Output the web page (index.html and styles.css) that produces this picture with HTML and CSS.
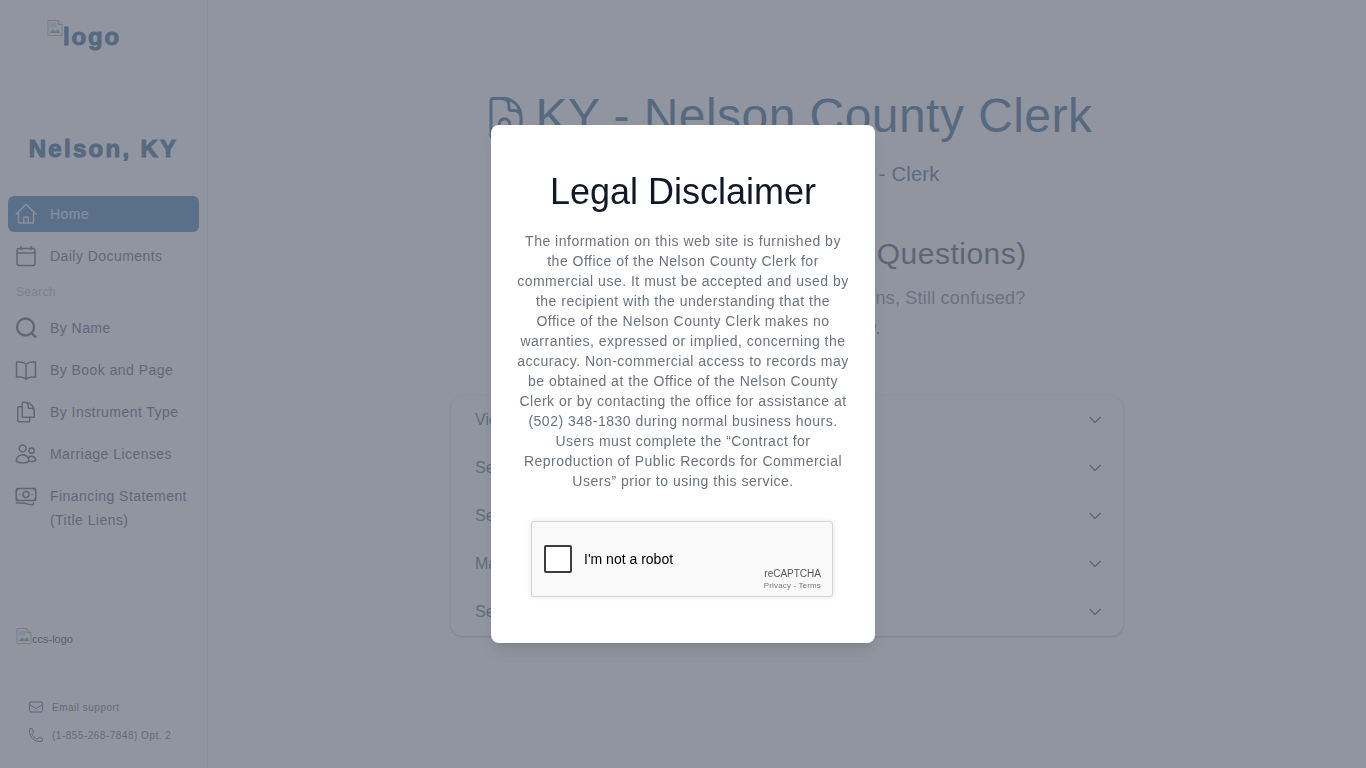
FILE: index.html
```html
<!DOCTYPE html>
<html lang="en">
  <head>
    <meta charset="UTF-8" />
    <title>KY - Nelson County Clerk</title>
    <link rel="stylesheet" href="styles.css">
  </head>
  <body>
    <div class="app">
      <aside class="sidebar">
        <div class="logo">
          <svg class="broken-img" viewBox="0 0 16 16"><path class="bi-page" d="M1 .5h10l4 4v11H1z"/><path class="bi-fold" d="M11 .5v4h4"/><path class="bi-hill" d="M2.5 13l3.5-4 2.5 2.5L11 9l2.5 4z"/><path class="bi-sky" d="M2.5 2.5h7v5h-7z"/></svg>
          <span>logo</span>
        </div>
        <h2 class="county">Nelson, KY</h2>
        <nav class="nav">
          <a class="nav-item active">
            <svg class="icon" viewBox="0 0 24 24"><path d="M2.25 12l8.954-8.955c.44-.439 1.152-.439 1.591 0L21.75 12M4.5 9.75v10.125c0 .621.504 1.125 1.125 1.125H9.75v-4.875c0-.621.504-1.125 1.125-1.125h2.25c.621 0 1.125.504 1.125 1.125V21h4.125c.621 0 1.125-.504 1.125-1.125V9.75M8.25 21h8.25"/></svg>
            <span>Home</span>
          </a>
          <a class="nav-item">
            <svg class="icon" viewBox="0 0 24 24"><path d="M7 2.5v3M17 2.5v3M5 4.5h14A2 2 0 0121 6.500v13a2 2 0 01-2 2H5a2 2 0 01-2-2v-13a2 2 0 012-2zM3 9h18"/></svg>
            <span>Daily Documents</span>
          </a>
          <p class="nav-label">Search</p>
          <a class="nav-item">
            <svg class="icon icon-bold" viewBox="0 0 24 24"><circle cx="11.500" cy="11" r="8.500"/><path d="M18 17.500l3.500 3.500"/></svg>
            <span>By Name</span>
          </a>
          <a class="nav-item">
            <svg class="icon" viewBox="0 0 24 24"><path d="M12 6.500C10.500 4.800 8 4 6 4H2.500v15H6c2.400 0 4.600.7 6 2.300m0-14.800C13.500 4.800 16 4 18 4h3.500v15H18c-2.400 0-4.600.7-6 2.300m0-14.800v14.800"/></svg>
            <span>By Book and Page</span>
          </a>
          <a class="nav-item">
            <svg class="icon" viewBox="0 0 24 24"><path d="M15.750 17.250v3.375c0 .621-.504 1.125-1.125 1.125h-9.750a1.125 1.125 0 01-1.125-1.125V7.875c0-.621.504-1.125 1.125-1.125H6.750a9.060 9.060 0 011.500.124m7.500 10.376h3.375c.621 0 1.125-.504 1.125-1.125V11.250c0-4.460-3.243-8.161-7.500-8.876a9.060 9.060 0 00-1.500-.124H9.375c-.621 0-1.125.504-1.125 1.125v3.500m7.500 10.375H9.375a1.125 1.125 0 01-1.125-1.125v-9.250m12 6.625v-1.875a3.375 3.375 0 00-3.375-3.375h-1.500a1.125 1.125 0 01-1.125-1.125v-1.500a3.375 3.375 0 00-3.375-3.375H9.750"/></svg>
            <span>By Instrument Type</span>
          </a>
          <a class="nav-item">
            <svg class="icon" viewBox="0 0 24 24"><path d="M15 19.128a9.380 9.380 0 002.625.372 9.337 9.337 0 004.121-.952 4.125 4.125 0 00-7.533-2.493M15 19.128v-.003c0-1.113-.285-2.160-.786-3.070M15 19.128v.106A12.318 12.318 0 018.624 21c-2.331 0-4.512-.645-6.374-1.766l-.001-.109a6.375 6.375 0 0111.964-3.070M12 6.375a3.375 3.375 0 11-6.750 0 3.375 3.375 0 016.750 0zm8.250 2.250a2.625 2.625 0 11-5.250 0 2.625 2.625 0 015.250 0z"/></svg>
            <span>Marriage Licenses</span>
          </a>
          <a class="nav-item">
            <svg class="icon" viewBox="0 0 24 24"><path d="M2.250 18.750a60.070 60.070 0 0115.797 2.101c.727.198 1.453-.342 1.453-1.096V18.750M3.750 4.500v.75A.75.75 0 013 6h-.75m0 0v-.375c0-.621.504-1.125 1.125-1.125H20.250M2.250 6v9m18-10.500v.75c0 .414.336.75.75.75h.75m-1.500-1.500h.375c.621 0 1.125.504 1.125 1.125v9.750c0 .621-.504 1.125-1.125 1.125h-.375m1.500-1.500H21a.75.75 0 00-.75.75v.75m0 0H3.750m0 0h-.375a1.125 1.125 0 01-1.125-1.125V15m1.500 1.500v-.75A.75.75 0 003 15h-.75M15 10.500a3 3 0 11-6 0 3 3 0 016 0zm3 0h.008v.008H18V10.500zm-12 0h.008v.008H6V10.500z"/></svg>
            <span>Financing Statement (Title Liens)</span>
          </a>
        </nav>
        <div class="ccs-logo">
          <svg class="broken-img" viewBox="0 0 16 16"><path class="bi-page" d="M1 .5h10l4 4v11H1z"/><path class="bi-fold" d="M11 .5v4h4"/><path class="bi-hill" d="M2.5 13l3.5-4 2.5 2.5L11 9l2.5 4z"/><path class="bi-sky" d="M2.5 2.5h7v5h-7z"/></svg>
          <span>ccs-logo</span>
        </div>
        <div class="support">
          <a class="support-item">
            <svg class="icon-sm" viewBox="0 0 24 24"><path d="M21.750 6.750v10.500a2.250 2.250 0 01-2.250 2.250h-15a2.250 2.250 0 01-2.250-2.250V6.750m19.500 0A2.250 2.250 0 0019.500 4.500h-15a2.250 2.250 0 00-2.250 2.250m19.500 0v.243a2.250 2.250 0 01-1.070 1.916l-7.500 4.615a2.250 2.250 0 01-2.360 0L3.320 8.910a2.250 2.250 0 01-1.070-1.916V6.750"/></svg>
            <span>Email support</span>
          </a>
          <a class="support-item">
            <svg class="icon-sm" viewBox="0 0 24 24"><path d="M2.250 6.750c0 8.284 6.716 15 15 15h2.250a2.250 2.250 0 002.250-2.250v-1.372c0-.516-.351-.966-.852-1.091l-4.423-1.106c-.44-.11-.902.055-1.173.417l-.97 1.293c-.282.376-.769.542-1.210.38a12.035 12.035 0 01-7.143-7.143c-.162-.441.004-.928.38-1.210l1.293-.97c.363-.271.527-.734.417-1.173L6.963 3.102a1.125 1.125 0 00-1.091-.852H4.500A2.250 2.250 0 002.250 4.500v2.250z"/></svg>
            <span>(1-855-268-7848) Opt. 2</span>
          </a>
        </div>
      </aside>

      <main class="content">
        <h1 class="page-title">
          <svg class="title-icon" viewBox="0 0 24 24"><path d="M19.500 14.250v-2.625a3.375 3.375 0 00-3.375-3.375h-1.500A1.125 1.125 0 0113.500 7.125v-1.500a3.375 3.375 0 00-3.375-3.375H8.250M10.500 2.250H5.625c-.621 0-1.125.504-1.125 1.125v17.250c0 .621.504 1.125 1.125 1.125h12.750c.621 0 1.125-.504 1.125-1.125V11.250a9 9 0 00-9-9zM13.100 16.900a2.600 2.600 0 10-3.700-3.700 2.600 2.600 0 003.700 3.700zm0 0L15 18.800"/></svg>
          <span>KY - Nelson County Clerk</span>
        </h1>
        <p class="page-sub">Kentucky - Nelson County - Clerk</p>
        <h2 class="faq-title">FAQ (Frequently Asked Questions)</h2>
        <p class="faq-text">If you've read through all our help sections, Still confused?</p>
        <p class="faq-text">Contact our office now.</p>
        <div class="accordion">
          <div class="acc-row">
            <span>Viewing Documents</span>
            <svg class="chevron" viewBox="0 0 24 24"><path d="M19.500 8.250l-7.500 7.500-7.500-7.500"/></svg>
          </div>
          <div class="acc-row">
            <span>Searching by Name</span>
            <svg class="chevron" viewBox="0 0 24 24"><path d="M19.500 8.250l-7.500 7.500-7.500-7.500"/></svg>
          </div>
          <div class="acc-row">
            <span>Searching by Book and Page</span>
            <svg class="chevron" viewBox="0 0 24 24"><path d="M19.500 8.250l-7.500 7.500-7.500-7.500"/></svg>
          </div>
          <div class="acc-row">
            <span>Marriage Licenses</span>
            <svg class="chevron" viewBox="0 0 24 24"><path d="M19.500 8.250l-7.500 7.500-7.500-7.500"/></svg>
          </div>
          <div class="acc-row">
            <span>Searching by Instrument Type</span>
            <svg class="chevron" viewBox="0 0 24 24"><path d="M19.500 8.250l-7.500 7.500-7.500-7.500"/></svg>
          </div>
        </div>
      </main>
    </div>

    <div class="overlay">
      <div class="modal">
        <h2 class="modal-title">Legal Disclaimer</h2>
        <p class="modal-text">The information on this web site is furnished by the Office of the Nelson County Clerk for commercial use. It must be accepted and used by the recipient with the understanding that the Office of the Nelson County Clerk makes no warranties, expressed or implied, concerning the accuracy. Non-commercial access to records may be obtained at the Office of the Nelson County Clerk or by contacting the office for assistance at (502) 348-1830 during normal business hours. Users must complete the “Contract for Reproduction of Public Records for Commercial Users” prior to using this service.</p>
        <div class="captcha">
          <span class="captcha-box"></span>
          <span class="captcha-label">I'm not a robot</span>
          <div class="captcha-brand">
            <span class="captcha-name">reCAPTCHA</span>
            <span class="captcha-links">Privacy - Terms</span>
          </div>
        </div>
      </div>
    </div>
  </body>
</html>
```

FILE: styles.css
```css
* {
  box-sizing: border-box;
}
body {
  margin: 0;
  font-family: "Liberation Sans", Arial, sans-serif;
  background-color: #ffffff;
  color: #374151;
  overflow: hidden;
}
h1, h2, p {
  margin: 0;
  font-weight: 400;
}
.app {
  display: flex;
  height: 768px;
}

/* sidebar */
.sidebar {
  width: 208px;
  flex-shrink: 0;
  display: flex;
  flex-direction: column;
  border-right: 1px solid #e5e7eb;
}
.broken-img {
  width: 16px;
  height: 16px;
  flex-shrink: 0;
}
.bi-page {
  fill: #ffffff;
  stroke: #a0a0a0;
}
.bi-fold {
  fill: #e0e0e0;
  stroke: #a0a0a0;
}
.bi-hill {
  fill: #5fae5f;
}
.bi-sky {
  fill: #c6d8f5;
}
.logo {
  display: flex;
  align-items: flex-start;
  margin: 20px 0 0 47px;
  height: 32px;
  font-size: 24px;
  font-weight: 700;
  line-height: 34px;
  color: #155080;
  letter-spacing: 1.8px;
  -webkit-text-stroke: 0.9px #155080;
}
.county {
  margin-top: 81px;
  text-align: center;
  font-size: 24px;
  font-weight: 700;
  line-height: 32px;
  color: #155080;
  letter-spacing: 2.3px;
  -webkit-text-stroke: 1.1px #155080;
}
.nav {
  display: flex;
  flex-direction: column;
  gap: 6px;
  margin-top: 31px;
  padding: 0 8px;
}
.nav-item {
  display: flex;
  align-items: flex-start;
  gap: 12px;
  padding: 6px 6px;
  border-radius: 6px;
  font-size: 14px;
  line-height: 24px;
  letter-spacing: 0.45px;
  color: #3f4756;
}
.nav-item.active {
  background-color: #2a6ea3;
  color: #e5e7eb;
}
.icon {
  width: 24px;
  height: 24px;
  flex-shrink: 0;
  fill: none;
  stroke: currentColor;
  stroke-width: 1.5;
  stroke-linecap: round;
  stroke-linejoin: round;
}
.icon-bold {
  stroke-width: 2.3;
}
.nav-label {
  margin: 4px 0 4px 8px;
  font-size: 12px;
  line-height: 16px;
  letter-spacing: 0.3px;
  color: #a9aeb8;
}
.ccs-logo {
  display: flex;
  align-items: flex-start;
  margin: 90px 0 0 16px;
  height: 16px;
  font-size: 11px;
  line-height: 22px;
  color: #1f2937;
}
.support {
  display: flex;
  flex-direction: column;
  gap: 12px;
  margin-top: 55px;
  padding-left: 28px;
}
.support-item {
  display: flex;
  align-items: center;
  gap: 8px;
  height: 16px;
  font-size: 10px;
  letter-spacing: 0.5px;
  color: #4b5563;
}
.icon-sm {
  width: 16px;
  height: 16px;
  flex-shrink: 0;
  fill: none;
  stroke: #155080;
  stroke-width: 1.5;
  stroke-linecap: round;
  stroke-linejoin: round;
}

/* main content */
.content {
  flex: 1;
  display: flex;
  flex-direction: column;
  align-items: center;
  padding-top: 88px;
}
.page-title {
  display: flex;
  align-items: center;
  gap: 6px;
  font-size: 48px;
  line-height: 56px;
  letter-spacing: 0.45px;
  color: #155080;
}
.title-icon {
  width: 48px;
  height: 48px;
  margin-top: 4px;
  fill: none;
  stroke: currentColor;
  stroke-width: 1.5;
  stroke-linecap: round;
  stroke-linejoin: round;
}
.page-sub {
  margin-top: 16px;
  font-size: 20px;
  line-height: 28px;
  letter-spacing: 0.3px;
  color: #31557a;
}
.faq-title {
  margin-top: 48px;
  font-size: 30px;
  line-height: 36px;
  letter-spacing: 0.5px;
  color: #374151;
}
.faq-text {
  margin-top: 2px;
  font-size: 18px;
  line-height: 28px;
  letter-spacing: 0.2px;
  color: #6b7280;
}
.faq-title + .faq-text {
  margin-top: 12px;
}
.accordion {
  width: 672px;
  margin-top: 54px;
  border-radius: 12px;
  box-shadow: 0 1px 3px rgba(0, 0, 0, 0.3), 0 1px 2px rgba(0, 0, 0, 0.1);
}
.acc-row {
  display: flex;
  align-items: center;
  justify-content: space-between;
  height: 48px;
  padding: 0 20px 0 24px;
  font-size: 16px;
  color: #4b5563;
}
.chevron {
  width: 16px;
  height: 16px;
  fill: none;
  stroke: #4b5563;
  stroke-width: 2.5;
  stroke-linecap: round;
  stroke-linejoin: round;
}

/* disclaimer modal */
.overlay {
  position: fixed;
  top: 0;
  left: 0;
  right: 0;
  bottom: 0;
  display: flex;
  align-items: center;
  justify-content: center;
  background-color: rgba(107, 114, 128, 0.75);
}
.modal {
  width: 384px;
  height: 518px;
  padding: 42px 24px 0;
  background: #ffffff;
  border-radius: 8px;
  box-shadow: 0 10px 15px -3px rgba(0, 0, 0, 0.1), 0 4px 6px -4px rgba(0, 0, 0, 0.1);
}
.modal-title {
  font-size: 36px;
  line-height: 50px;
  text-align: center;
  color: #111827;
}
.modal-text {
  margin-top: 14px;
  font-size: 14px;
  line-height: 20px;
  text-align: center;
  letter-spacing: 0.5px;
  color: #6b7280;
}
.captcha {
  position: relative;
  display: flex;
  align-items: center;
  width: 302px;
  height: 76px;
  margin: 30px 0 0 16px;
  padding-left: 12px;
  background: #f9f9f9;
  border: 1px solid #d3d3d3;
  border-radius: 3px;
  box-shadow: 0 0 4px 1px rgba(0, 0, 0, 0.08);
}
.captcha-box {
  width: 28px;
  height: 28px;
  background: #ffffff;
  border: 2px solid #3c3c3c;
  border-radius: 2px;
}
.captcha-label {
  margin-left: 12px;
  font-size: 14px;
  color: #000000;
}
.captcha-brand {
  position: absolute;
  right: 11px;
  bottom: 5px;
  display: flex;
  flex-direction: column;
  align-items: flex-end;
  gap: 1px;
}
.captcha-name {
  font-size: 10px;
  line-height: 13px;
  color: #555555;
}
.captcha-links {
  font-size: 8px;
  line-height: 10px;
  letter-spacing: 0.15px;
  color: #777777;
}
```
